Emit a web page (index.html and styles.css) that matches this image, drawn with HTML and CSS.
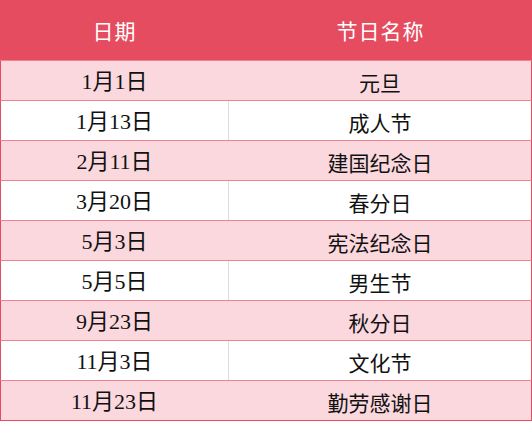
FILE: index.html
```html
<!DOCTYPE html>
<html lang="zh-CN">
<head>
<meta charset="utf-8">
<title>节日</title>
<link rel="stylesheet" href="styles.css">
</head>
<body>
<div class="table">
  <div class="row head">
    <div class="cell date">日期</div>
    <div class="cell name">节日名称</div>
  </div>
  <div class="row pink"><div class="cell date">1月1日</div><div class="cell name">元旦</div></div>
  <div class="row"><div class="cell date">1月13日</div><div class="cell name">成人节</div></div>
  <div class="row pink"><div class="cell date">2月11日</div><div class="cell name">建国纪念日</div></div>
  <div class="row"><div class="cell date">3月20日</div><div class="cell name">春分日</div></div>
  <div class="row pink"><div class="cell date">5月3日</div><div class="cell name">宪法纪念日</div></div>
  <div class="row"><div class="cell date">5月5日</div><div class="cell name">男生节</div></div>
  <div class="row pink"><div class="cell date">9月23日</div><div class="cell name">秋分日</div></div>
  <div class="row"><div class="cell date">11月3日</div><div class="cell name">文化节</div></div>
  <div class="row pink last"><div class="cell date">11月23日</div><div class="cell name">勤劳感谢日</div></div>
</div>
</body>
</html>
```
FILE: styles.css
```css
html, body {
  margin: 0;
  padding: 0;
  background: #ffffff;
}
.table {
  width: 532px;
  display: flex;
  flex-direction: column;
  font-family: "Noto Sans CJK SC", sans-serif;
  font-size: 21px;
  color: #111;
}
.row {
  display: grid;
  grid-template-columns: 228px 1fr;
  height: 40px;
  box-sizing: border-box;
  border-top: 1px solid #ef8391;
  border-left: 1px solid #e54c5f;
  border-right: 1px solid #e54c5f;
  background: #ffffff;
}
.row.pink {
  background: #fad8de;
}
.row.last {
  height: 41px;
  border-bottom: 1px solid #e54c5f;
}
.row.head {
  height: 60px;
  border: none;
  background: #e54c5f;
  color: #ffffff;
  grid-template-columns: 229px 1fr;
}
.cell {
  display: flex;
  align-items: center;
  justify-content: center;
  line-height: 1;
  box-sizing: border-box;
  padding-top: 3px;
}
.row .date {
  border-right: 1px solid #dcdcdc;
  font-family: "Liberation Serif", "Noto Sans CJK SC", serif;
  font-size: 22px;
}
.row.pink .date {
  border-right-color: #fad8de;
}
.row.head .cell {
  padding-top: 1px;
}
.row.head .date {
  border-right: none;
  font-family: "Noto Sans CJK SC", sans-serif;
  font-size: 21px;
  letter-spacing: 1px;
}
.row.head .name {
  letter-spacing: 1px;
}
```
